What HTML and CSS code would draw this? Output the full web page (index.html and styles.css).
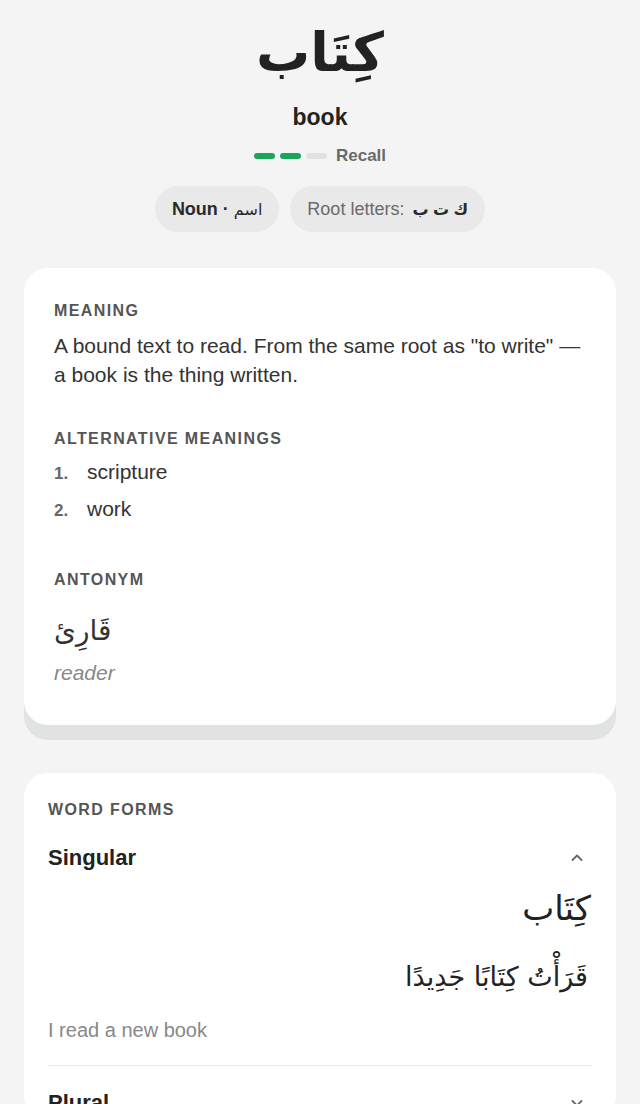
FILE: index.html
```html
<!DOCTYPE html>
<html lang="en">
<head>
<meta charset="utf-8">
<link rel="stylesheet" href="styles.css">
</head>
<body>
<main class="page">
  <header class="hero">
    <h1 class="word" lang="ar" dir="rtl">كِتَاب</h1>
    <div class="gloss">book</div>
    <div class="recall">
      <span class="seg on"></span><span class="seg on"></span><span class="seg"></span>
      <span class="recall-label">Recall</span>
    </div>
    <div class="chips">
      <span class="chip chip-pos">Noun · <span class="pos-ar" lang="ar">اسم</span></span>
      <span class="chip chip-root">Root letters: <span class="root" lang="ar" dir="rtl">ك ت ب</span></span>
    </div>
  </header>

  <section class="card card-meaning">
    <h2 class="label">MEANING</h2>
    <p class="meaning">A bound text to read. From the same root as "to write" — a book is the thing written.</p>

    <h2 class="label label-alt">ALTERNATIVE MEANINGS</h2>
    <ol class="alts">
      <li><span class="num">1.</span><span>scripture</span></li>
      <li><span class="num">2.</span><span>work</span></li>
    </ol>

    <h2 class="label label-ant">ANTONYM</h2>
    <div class="ant-ar" lang="ar" dir="rtl">قَارِئ</div>
    <div class="ant-en">reader</div>
  </section>

  <section class="card card-forms">
    <h2 class="label">WORD FORMS</h2>
    <div class="form-head form-head-a">
      <span class="form-name">Singular</span>
      <svg class="chev" width="16" height="16" viewBox="0 0 16 16"><path d="M3.5 10 L8 5.5 L12.5 10" fill="none" stroke="#666" stroke-width="1.8" stroke-linecap="round" stroke-linejoin="round"/></svg>
    </div>
    <div class="form-body">
      <div class="form-ar" lang="ar" dir="rtl">كِتَاب</div>
      <div class="form-ex" lang="ar" dir="rtl">قَرَأْتُ كِتَابًا جَدِيدًا</div>
      <div class="form-tr">I read a new book</div>
    </div>
    <div class="form-head form-head-b">
      <span class="form-name">Plural</span>
      <svg class="chev" width="16" height="16" viewBox="0 0 16 16"><path d="M3.5 6 L8 10.5 L12.5 6" fill="none" stroke="#666" stroke-width="1.8" stroke-linecap="round" stroke-linejoin="round"/></svg>
    </div>
  </section>
</main>
</body>
</html>
```
FILE: styles.css
```css
* { box-sizing: border-box; }
html, body { margin: 0; padding: 0; }
body {
  background: #f4f4f4;
  font-family: "Liberation Sans", "DejaVu Sans", sans-serif;
  color: #222;
  width: 640px;
  height: 1104px;
  overflow: hidden;
}
.page { padding: 0 24px; }
.hero {
  display: flex;
  flex-direction: column;
  align-items: center;
  padding-top: 15px;
}
.word {
  margin: 0;
  font-family: "DejaVu Sans", sans-serif;
  font-size: 54px;
  font-weight: bold;
  line-height: 76px;
  color: #222;
}
.gloss {
  margin-top: 12px;
  font-size: 23px;
  font-weight: bold;
  line-height: 28px;
}
.recall {
  display: flex;
  align-items: center;
  gap: 5px;
  margin-top: 16px;
  height: 18px;
}
.seg {
  width: 21px;
  height: 6px;
  border-radius: 3px;
  background: #e2e2e2;
}
.seg.on { background: #1aa55a; }
.recall-label {
  margin-left: 4px;
  font-size: 17px;
  font-weight: bold;
  color: #6a6a6a;
}
.chips {
  display: flex;
  gap: 11px;
  margin-top: 21px;
}
.chip {
  display: inline-flex;
  align-items: center;
  height: 46px;
  padding: 0 17px;
  border-radius: 23px;
  background: #e9e9e9;
  font-size: 18px;
  white-space: pre;
}
.chip-pos { font-weight: bold; color: #2a2a2a; }
.pos-ar { font-weight: normal; font-size: 16px; }
.chip-root { color: #6a6a6a; }
.root { color: #2a2a2a; font-weight: bold; font-size: 16px; margin-left: 3px; }

.card {
  background: #fff;
  border-radius: 24px;
}
.card-meaning {
  margin-top: 36px;
  padding: 32px 30px 37px;
  box-shadow: 0 15px 0 #e1e2e2;
}
.label {
  margin: 0;
  font-size: 16px;
  font-weight: bold;
  letter-spacing: 1.4px;
  color: #555;
  line-height: 22px;
}
.meaning {
  margin: 9px 0 0;
  font-size: 21px;
  line-height: 29px;
  color: #333;
}
.label-alt { margin-top: 39px; }
.alts {
  list-style: none;
  margin: 3px 0 0;
  padding: 0;
}
.alts li {
  display: flex;
  align-items: baseline;
  height: 37px;
  line-height: 37px;
  font-size: 21px;
  color: #333;
}
.num {
  width: 33px;
  font-size: 17px;
  font-weight: bold;
  color: #666;
}
.label-ant { margin-top: 42px; }
.ant-ar {
  margin-top: 16px;
  font-family: "DejaVu Sans", sans-serif;
  font-size: 28px;
  line-height: 48px;
  text-align: left;
  direction: ltr;
  color: #333;
}
.ant-en {
  margin-top: 3px;
  font-size: 21px;
  font-style: italic;
  color: #888;
  line-height: 30px;
}
.card-forms {
  margin-top: 48px;
  padding: 26px 24px 0;
}
.form-head {
  display: flex;
  align-items: center;
  justify-content: space-between;
  height: 34px;
}
.form-head-a { margin-top: 20px; }
.form-name {
  font-size: 22px;
  font-weight: bold;
  color: #222;
}
.chev { margin-right: 7px; }
.form-body {
  border-bottom: 1px solid #ececec;
  padding-bottom: 21px;
}
.form-ar {
  margin-top: 8px;
  font-family: "DejaVu Sans", sans-serif;
  font-size: 34px;
  line-height: 50px;
  color: #222;
  padding-right: 1px;
}
.form-ex {
  margin-top: 21px;
  font-family: "DejaVu Sans", sans-serif;
  font-size: 27px;
  line-height: 46px;
  color: #222;
  padding-right: 4px;
}
.form-tr {
  margin-top: 16px;
  font-size: 20px;
  color: #888;
  line-height: 28px;
}
.form-head-b { margin-top: 20px; }
```
